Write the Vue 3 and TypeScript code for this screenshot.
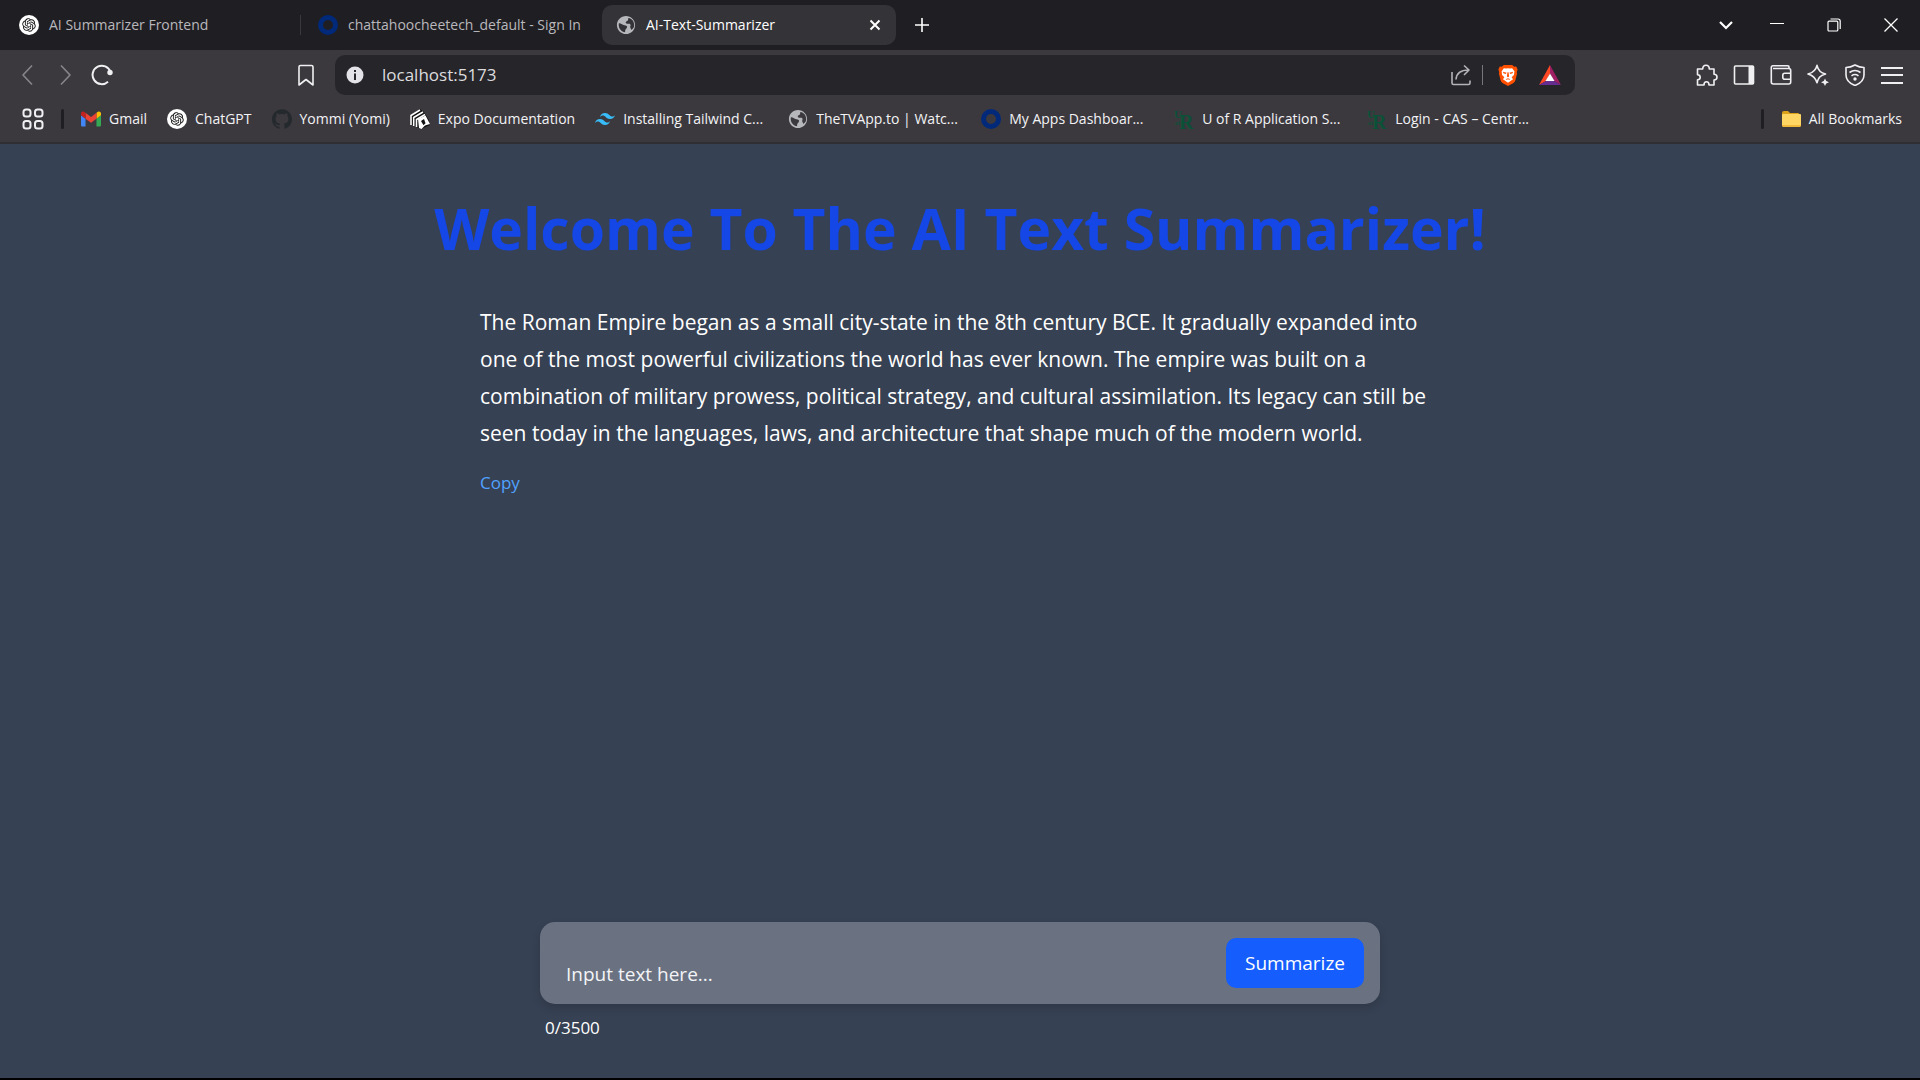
<script setup lang="ts">
import { computed, ref } from 'vue'

interface Tab {
  icon: string
  title: string
  active: boolean
}

interface Bookmark {
  icon: string
  label: string
  clipped?: boolean
}

const MAX_CHARS = 3500

const tabs: Tab[] = [
  { icon: 'openai', title: 'AI Summarizer Frontend', active: false },
  { icon: 'ring', title: 'chattahoocheetech_default - Sign In', active: false },
  { icon: 'globe', title: 'AI-Text-Summarizer', active: true },
]

const bookmarks: Bookmark[] = [
  { icon: 'gmail', label: 'Gmail' },
  { icon: 'openai', label: 'ChatGPT' },
  { icon: 'github', label: 'Yommi (Yomi)' },
  { icon: 'expo', label: 'Expo Documentation' },
  { icon: 'tailwind', label: 'Installing Tailwind C...', clipped: true },
  { icon: 'globe', label: 'TheTVApp.to | Watc...', clipped: true },
  { icon: 'ring', label: 'My Apps Dashboar...', clipped: true },
  { icon: 'regina', label: 'U of R Application S...', clipped: true },
  { icon: 'regina', label: 'Login - CAS – Centr...', clipped: true },
]

const tools = [
  { icon: 'puzzle', name: 'Extensions' },
  { icon: 'sidebar', name: 'Sidebar' },
  { icon: 'wallet', name: 'Wallet' },
  { icon: 'sparkle', name: 'Assistant' },
  { icon: 'vpn', name: 'VPN' },
  { icon: 'menu', name: 'Menu' },
]

const address = ref('localhost:5173')
const draft = ref('')
const counter = computed(() => `${draft.value.length}/${MAX_CHARS}`)

const summary = ref(
  'The Roman Empire began as a small city-state in the 8th century BCE. It gradually expanded into one of the most powerful civilizations the world has ever known. The empire was built on a combination of military prowess, political strategy, and cultural assimilation. Its legacy can still be seen today in the languages, laws, and architecture that shape much of the modern world.',
)

function copySummary(): void {
  void navigator.clipboard?.writeText(summary.value)
}
</script>

<template>
  <svg class="sprite" aria-hidden="true">
    <symbol id="openai" viewBox="0 0 40 40">
      <circle cx="20" cy="20" r="20" fill="#fff" />
      <path
        transform="translate(6.5 6.5) scale(1.125)"
        fill="#111"
        d="M22.2819 9.8211a5.9847 5.9847 0 0 0-.5157-4.9108 6.0462 6.0462 0 0 0-6.5098-2.9A6.0651 6.0651 0 0 0 4.9807 4.1818a5.9847 5.9847 0 0 0-3.9977 2.9 6.0462 6.0462 0 0 0 .7427 7.0966 5.98 5.98 0 0 0 .511 4.9107 6.051 6.051 0 0 0 6.5146 2.9001A5.9847 5.9847 0 0 0 13.2599 24a6.0557 6.0557 0 0 0 5.7718-4.2058 5.9894 5.9894 0 0 0 3.9977-2.9001 6.0557 6.0557 0 0 0-.7475-7.0729zm-9.022 12.6081a4.4755 4.4755 0 0 1-2.8764-1.0408l.1419-.0804 4.7783-2.7582a.7948.7948 0 0 0 .3927-.6813v-6.7369l2.02 1.1686a.071.071 0 0 1 .038.052v5.5826a4.504 4.504 0 0 1-4.4945 4.4944zm-9.6607-4.1254a4.4708 4.4708 0 0 1-.5346-3.0137l.142.0852 4.783 2.7582a.7712.7712 0 0 0 .7806 0l5.8428-3.3685v2.3324a.0804.0804 0 0 1-.0332.0615L9.74 19.9502a4.4992 4.4992 0 0 1-6.1408-1.6464zM2.3408 7.8956a4.485 4.485 0 0 1 2.3655-1.9728V11.6a.7664.7664 0 0 0 .3879.6765l5.8144 3.3543-2.0201 1.1685a.0757.0757 0 0 1-.071 0l-4.8303-2.7865A4.504 4.504 0 0 1 2.3408 7.872zm16.5963 3.8558L13.1038 8.364 15.1192 7.2a.0757.0757 0 0 1 .071 0l4.8303 2.7913a4.4944 4.4944 0 0 1-.6765 8.1042v-5.6772a.79.79 0 0 0-.407-.667zm2.0107-3.0231l-.142-.0852-4.7735-2.7818a.7759.7759 0 0 0-.7854 0L9.409 9.2297V6.8974a.0662.0662 0 0 1 .0284-.0615l4.8303-2.7866a4.4992 4.4992 0 0 1 6.6802 4.66zM8.3065 12.863l-2.02-1.1638a.0804.0804 0 0 1-.038-.0567V6.0742a4.4992 4.4992 0 0 1 7.3757-3.4537l-.142.0805L8.704 5.459a.7948.7948 0 0 0-.3927.6813zm1.0976-2.3654l2.602-1.4998 2.6069 1.4998v2.9994l-2.5974 1.4997-2.6067-1.4997Z"
      />
    </symbol>
    <symbol id="ring" viewBox="0 0 20 20">
      <circle cx="10" cy="10" r="7.5" fill="none" stroke="#00297a" stroke-width="5" />
    </symbol>
    <symbol id="globe" viewBox="1 1 22 22">
      <path
        fill="currentColor"
        d="M12 2C6.48 2 2 6.48 2 12s4.48 10 10 10 10-4.48 10-10S17.52 2 12 2zm-1 17.93c-3.95-.49-7-3.85-7-7.93 0-.62.08-1.21.21-1.79 1.5-.5 3.500 1.200 5 1.800 1.600.500 3 .200 3.800 1.500.700 1.300-.600 2.500-1.500 3.490-.4.9-.51 1.600-.51 2.930zm6.900-2.540c-.3-1.6-1.500-2.100-1.300-3.400.2-1.200 1.200-2.400-.600-3.300-1.500-.6-3.900.200-4.300-1.300-.3-1.700 2.300-1.500 2.600-3 .1-.7-.2-1.300.500-1.980 3.500.3 6.200 3.980 6.200 7.590 0 2.080-.8 3.970-3.100 5.390z"
      />
    </symbol>
    <symbol id="gmail" viewBox="52 42 88 66">
      <path fill="#4285f4" d="M58 108h14V74L52 59v43c0 3.320 2.690 6 6 6" />
      <path fill="#34a853" d="M120 108h14c3.320 0 6-2.690 6-6V59l-20 15" />
      <path fill="#fbbc04" d="M120 48v26l20-15v-8c0-7.420-8.470-11.650-14.400-7.200" />
      <path fill="#ea4335" d="M72 74V48l24 18 24-18v26L96 92" />
      <path fill="#c5221f" d="M52 51v8l20 15V48l-5.600-4.200c-5.940-4.450-14.400-.22-14.400 7.200" />
    </symbol>
    <symbol id="github" viewBox="0 0 24 24">
      <path
        fill="#24292e"
        d="M12 .297c-6.63 0-12 5.373-12 12 0 5.303 3.438 9.8 8.205 11.385.6.113.82-.258.82-.577 0-.285-.01-1.04-.015-2.04-3.338.724-4.042-1.61-4.042-1.61C4.422 18.070 3.633 17.700 3.633 17.700c-1.087-.744.084-.729.084-.729 1.205.084 1.838 1.236 1.838 1.236 1.070 1.835 2.809 1.305 3.495.998.108-.776.417-1.305.76-1.605-2.665-.3-5.466-1.332-5.466-5.930 0-1.310.465-2.380 1.235-3.220-.135-.303-.54-1.523.105-3.176 0 0 1.005-.322 3.300 1.230.96-.267 1.980-.399 3-.405 1.020.006 2.040.138 3 .405 2.280-1.552 3.285-1.230 3.285-1.230.645 1.653.24 2.873.12 3.176.765.840 1.230 1.910 1.230 3.220 0 4.610-2.805 5.625-5.475 5.920.42.360.81 1.096.81 2.220 0 1.606-.015 2.896-.015 3.286 0 .315.210.690.825.570C20.565 22.092 24 17.592 24 12.297c0-6.627-5.373-12-12-12"
      />
    </symbol>
    <symbol id="expo" viewBox="0 0 20 20">
      <path fill="#111" d="M0 7 10 0l4 3 5 8 1 5-9 4-11-5Z" />
      <path fill="none" stroke="#fff" stroke-width="1.600" d="M1 16V6.500L10 1M3.700 17V8.500L13 3M6.500 18v-7.500L15 5.500" />
      <path fill="#fff" d="m8 10 7.500-3.500L20 15l-5 1.500-3.500 3.500-2.500-1Z" />
      <path fill="#111" d="m11 12 3-2 1.500 4.200-2 2Z" />
    </symbol>
    <symbol id="tailwind" viewBox="0 0 24 24">
      <path
        fill="#38bdf8"
        d="M12.001,4.8c-3.2,0-5.2,1.6-6,4.8c1.2-1.6,2.6-2.2,4.2-1.8c0.913,0.228,1.565,0.89,2.288,1.624C13.666,10.618,15.027,12,18.001,12c3.2,0,5.2-1.6,6-4.8c-1.2,1.6-2.6,2.2-4.2,1.8c-0.913-0.228-1.565-0.89-2.288-1.624C16.337,6.182,14.976,4.8,12.001,4.8z M6.001,12c-3.2,0-5.2,1.6-6,4.8c1.2-1.6,2.6-2.2,4.2-1.8c0.913,0.228,1.565,0.89,2.288,1.624c1.177,1.194,2.538,2.576,5.512,2.576c3.2,0,5.2-1.6,6-4.8c-1.2,1.6-2.6,2.2-4.2,1.8c-0.913-0.228-1.565-0.89-2.288-1.624C10.337,13.382,8.976,12,6.001,12z"
      />
    </symbol>
    <symbol id="regina" viewBox="0 0 20 20">
      <g fill="#0b5138" font-family="Liberation Serif, serif" font-weight="bold">
        <text x="0" y="9" font-size="11">U</text>
        <text x="1" y="16" font-size="6">of</text>
        <text x="5" y="20" font-size="20">R</text>
      </g>
    </symbol>
    <symbol id="folder" viewBox="0 0 20 20">
      <path fill="#dca21c" d="M1 4q0-2 2-2h4l2 2h8q1 0 1 1v6H1Z" />
      <path fill="#ffd663" d="M1 6q0-1 1-1h17q1 0 1 1v10q0 2-2 2H3q-2 0-2-2Z" />
      <path fill="#f0b93a" d="M1 16h19q0 2-2 2H3q-2 0-2-2Z" />
    </symbol>
    <symbol id="back" viewBox="0 0 22 22"><path class="line" d="M15 1.500 6 11l9 9.500" /></symbol>
    <symbol id="forward" viewBox="0 0 22 22"><path class="line" d="m7 1.500 9 9.500-9 9.500" /></symbol>
    <symbol id="reload" viewBox="0 0 22 22">
      <path fill="none" stroke="currentColor" stroke-width="2" d="M19.500 8A9.200 9.200 0 1 0 17 17.700" />
      <circle cx="19" cy="8.500" r="2.700" fill="currentColor" />
    </symbol>
    <symbol id="ribbon" viewBox="0 0 22 22">
      <path class="line" d="M4 3q0-1.500 1.500-1.500h11Q18 1.500 18 3v18l-7-5.500L4 21Z" />
    </symbol>
    <symbol id="info" viewBox="0 0 18 18">
      <circle cx="9" cy="9" r="8.500" fill="#e3e3e8" />
      <path fill="#26252a" d="M8 7.500h2V14H8ZM8 4h2v2H8Z" />
    </symbol>
    <symbol id="share" viewBox="0 0 22 22">
      <path class="line" d="M2 8v11q0 1.500 1.500 1.500h15q1.500 0 1.500-1.500v-2.500M6 15.500C6.500 9 11 6 18.500 6M14 1.500 19 6l-5 5" />
    </symbol>
    <symbol id="brave" viewBox="0 0 22 24">
      <path fill="#ff5000" d="M6.500 1h9L18 3l2-.3L21.500 6l-1 3 .5 1-2 8q-.5 2-2.500 3L11 24l-5.500-3Q3.500 20 3 18l-2-8 .5-1-1-3L2 2.700 4 3Z" />
      <path
        fill="#fff"
        d="m4 8 2.500-3.500 2.500.5 2-.5 2 .5 2.500-.5L18 8l-.5 4-2.500 2.500 1.500 2L11 20.500l-5.500-4 1.500-2L4.500 12Z"
      />
      <path
        fill="#ff5000"
        d="m5.500 8.500 4 1-1 1.500-2.500-1Zm11 0-4 1 1 1.500 2.500-1ZM10.400 9h1.200l.6 4.500-1.200 1-1.200-1ZM8.500 16.500l2.500-1 2.500 1-1 .8-1.500-.8-1.500.8Z"
      />
    </symbol>
    <symbol id="bat" viewBox="0 0 22 20">
      <path fill="#ff4724" d="M11 0 0 20l7-4 4-7.500Z" />
      <path fill="#9e1f63" d="m11 0 11 20-7-4-4-7.500Z" />
      <path fill="#662d91" d="M0 20h22l-7-4H7Z" />
      <path fill="#fff" d="m11 8.500 4.500 7.500h-9Z" />
    </symbol>
    <symbol id="puzzle" viewBox="0 0 22 22">
      <path
        class="line"
        d="M1.500 5h5.200C6.700 2.800 7.800 1.200 10 1.200s3.300 1.600 3.300 3.800H18v5.200c2 0 3 1.100 3 2.800s-1 3-3 3v5h-5c0-2-.8-3.200-2.500-3.200S8 19 8 21H1.500v-5.200c1.800 0 2.700-.9 2.700-2.500s-.9-2.600-2.700-2.600Z"
      />
    </symbol>
    <symbol id="sidebar" viewBox="0 0 22 22">
      <rect class="line" x="1.500" y="2" width="19" height="18" rx="1" />
      <path fill="currentColor" d="M15.500 2h5.500v18h-5.500Z" />
    </symbol>
    <symbol id="wallet" viewBox="0 0 22 22">
      <path
        class="line"
        d="M19 4.500V3q0-1.200-1.200-1.200H3Q1.300 1.800 1.300 3.500V18q0 2 2 2h15.400q2 0 2-2V6.500q0-2-2-2H3M20.500 9.300h-5.700q-2 0-2 2v2q0 2 2 2h5.700"
      />
    </symbol>
    <symbol id="sparkle" viewBox="0 0 22 22">
      <path class="line" d="M10 1.300q1.500 7 8.500 8.700-4 1-6 3.300-1.500 2-2.500 5.400Q8 12 1 10 8.500 8 10 1.300Z" />
      <path fill="currentColor" d="m18 14.500 1.200 2.600L22 18.300l-2.800 1.200L18 22l-1.200-2.500-2.800-1.200 2.800-1.200Z" />
    </symbol>
    <symbol id="vpn" viewBox="0 0 22 22">
      <path class="line" d="M11 1q4.500 2.500 9 2.500v7.500q0 7-9 10.500-9-3.500-9-10.500V3.500Q6.500 3.500 11 1Z" />
      <path class="line" d="M5.500 8.500q5.500-4 11 0M7.500 11.800q3.500-2.500 7 0" />
      <circle cx="11" cy="15" r="1.700" fill="currentColor" />
    </symbol>
    <symbol id="menu" viewBox="0 0 22 22">
      <path fill="none" stroke="currentColor" stroke-width="2" d="M0 4h22M0 11h22M0 19h22" />
    </symbol>
    <symbol id="apps" viewBox="0 0 22 22">
      <g fill="none" stroke="currentColor" stroke-width="2">
        <rect x="1.500" y="1.500" width="7" height="7" rx="2.500" />
        <rect x="13" y="1.500" width="7.500" height="7" rx="2.500" />
        <rect x="1.500" y="13" width="7" height="7.500" rx="2.500" />
        <rect x="13" y="13" width="7.500" height="7.500" rx="2.500" />
      </g>
    </symbol>
    <symbol id="close-tab" viewBox="0 0 14 14">
      <path fill="none" stroke="currentColor" stroke-width="2" d="m2.500 2.500 9 9m0-9-9 9" />
    </symbol>
    <symbol id="plus" viewBox="0 0 14 14">
      <path fill="none" stroke="currentColor" stroke-width="1.600" d="M7 0v14M0 7h14" />
    </symbol>
    <symbol id="chevron" viewBox="0 0 14 14">
      <path fill="none" stroke="currentColor" stroke-width="2.200" d="m1 4 6 6 6-6" />
    </symbol>
    <symbol id="minimize" viewBox="0 0 14 14"><path fill="currentColor" d="M0 5h14v1H0Z" /></symbol>
    <symbol id="restore" viewBox="0 0 14 14">
      <g fill="none" stroke="currentColor" stroke-width="1.200">
        <rect x="1" y="3.200" width="9.800" height="9.800" rx="1" />
        <path d="M3.500 1h7.500q2.200 0 2.200 2.200V11" />
      </g>
    </symbol>
    <symbol id="close" viewBox="0 0 14 14">
      <path fill="none" stroke="currentColor" stroke-width="1.300" d="m.5.5 13 13m0-13-13 13" />
    </symbol>
  </svg>

  <div class="window">
    <header class="chrome">
      <div class="tab-strip">
        <nav class="tabs" aria-label="Tabs">
          <div v-for="tab in tabs" :key="tab.title" class="tab" :class="{ active: tab.active }">
            <button class="tab-title" type="button">
              <svg class="favicon"><use :href="`#${tab.icon}`" /></svg>
              <span>{{ tab.title }}</span>
            </button>
            <button v-if="tab.active" class="small-button" type="button" aria-label="Close tab">
              <svg><use href="#close-tab" /></svg>
            </button>
          </div>
          <button class="small-button new-tab" type="button" aria-label="New tab">
            <svg><use href="#plus" /></svg>
          </button>
        </nav>
        <div class="window-controls">
          <button class="small-button" type="button" aria-label="Search tabs"><svg><use href="#chevron" /></svg></button>
          <div class="frame-buttons">
            <button class="small-button" type="button" aria-label="Minimize"><svg><use href="#minimize" /></svg></button>
            <button class="small-button" type="button" aria-label="Restore"><svg><use href="#restore" /></svg></button>
            <button class="small-button" type="button" aria-label="Close"><svg><use href="#close" /></svg></button>
          </div>
        </div>
      </div>

      <div class="toolbar">
        <div class="nav-buttons">
          <button class="tool dim" type="button" aria-label="Back"><svg><use href="#back" /></svg></button>
          <button class="tool dim" type="button" aria-label="Forward"><svg><use href="#forward" /></svg></button>
          <button class="tool" type="button" aria-label="Reload"><svg><use href="#reload" /></svg></button>
        </div>
        <button class="tool" type="button" aria-label="Bookmark this page"><svg><use href="#ribbon" /></svg></button>
        <div class="address-bar">
          <svg class="site-info"><use href="#info" /></svg>
          <input v-model="address" class="address" type="text" aria-label="Address" spellcheck="false" />
          <button class="tool share" type="button" aria-label="Share"><svg><use href="#share" /></svg></button>
          <span class="rule"></span>
          <button class="tool" type="button" aria-label="Shields"><svg><use href="#brave" /></svg></button>
          <button class="tool" type="button" aria-label="Rewards"><svg><use href="#bat" /></svg></button>
        </div>
        <div class="tools">
          <button v-for="tool in tools" :key="tool.icon" class="tool" type="button" :aria-label="tool.name">
            <svg><use :href="`#${tool.icon}`" /></svg>
          </button>
        </div>
      </div>

      <nav class="bookmarks" aria-label="Bookmarks">
        <button class="tool" type="button" aria-label="Tab groups"><svg><use href="#apps" /></svg></button>
        <span class="divider"></span>
        <a
          v-for="bookmark in bookmarks"
          :key="bookmark.label"
          class="bookmark"
          :class="{ clipped: bookmark.clipped }"
          href="#"
        >
          <svg class="favicon"><use :href="`#${bookmark.icon}`" /></svg>
          <span>{{ bookmark.label }}</span>
        </a>
        <span class="divider last"></span>
        <a class="bookmark" href="#">
          <svg class="favicon"><use href="#folder" /></svg>
          <span>All Bookmarks</span>
        </a>
      </nav>
    </header>

    <main class="page">
      <h1>Welcome To The AI Text Summarizer!</h1>
      <section class="result">
        <p>{{ summary }}</p>
        <button class="copy" type="button" @click="copySummary">Copy</button>
      </section>
      <form class="composer" @submit.prevent>
        <div class="field">
          <textarea
            v-model="draft"
            rows="1"
            :maxlength="MAX_CHARS"
            placeholder="Input text here..."
            aria-label="Input text"
          ></textarea>
          <button class="submit" type="submit">Summarize</button>
        </div>
        <output class="counter">{{ counter }}</output>
      </form>
    </main>
  </div>
</template>

<style>
body {
  margin: 0;
  background: #000;
}
</style>

<style scoped>
* {
  box-sizing: border-box;
}

.sprite {
  display: none;
}

.line {
  fill: none;
  stroke: currentColor;
  stroke-width: 1.6;
  stroke-linejoin: round;
}

.window {
  display: flex;
  flex-direction: column;
  min-height: 100vh;
  border-bottom: 2px solid #000;
  font-family: 'Open Sans', 'Noto Sans', sans-serif;
  color: #fff;
}

button,
input,
textarea {
  margin: 0;
  padding: 0;
  border: 0;
  outline: 0;
  background: none;
  color: inherit;
  font: inherit;
}

svg {
  display: block;
  flex: none;
}

/* Browser chrome */
.chrome {
  background: #3b393e;
  border-bottom: 2px solid #2f2e33;
  font-size: 14px;
  line-height: 20px;
}

.tab-strip {
  display: flex;
  justify-content: space-between;
  align-items: center;
  height: 50px;
  padding-left: 7px;
  background: #1f1e23;
}

.tabs {
  display: flex;
  align-items: center;
}

.tab {
  display: flex;
  align-items: center;
  width: 294px;
  height: 40px;
  padding: 0 14px 0 12px;
  border-radius: 10px;
  color: #b9b8bc;
}

.tab + .tab {
  margin-left: 5px;
}

.tab:first-child {
  background: linear-gradient(#3b393e, #3b393e) right center / 1px 20px no-repeat;
  border-radius: 0;
}

.tab.active {
  margin-left: 2px;
  padding-left: 14px;
  background: #343338;
  color: #fff;
}

.tab-title {
  display: flex;
  flex: 1;
  align-items: center;
  gap: 10px;
  min-width: 0;
  white-space: nowrap;
}

.favicon {
  width: 20px;
  height: 20px;
  color: #b5b7bb;
}

.small-button svg {
  width: 14px;
  height: 14px;
}

.new-tab {
  margin-left: 19px;
}

.window-controls,
.frame-buttons {
  display: flex;
}

.window-controls {
  gap: 37px;
  padding-right: 22px;
}

.frame-buttons {
  gap: 43px;
}

.toolbar {
  display: flex;
  align-items: center;
  height: 50px;
  padding: 0 17px;
}

.nav-buttons {
  display: flex;
  flex: 0 1 278px;
  gap: 15px;
}

.tool {
  color: #f0f0f2;
}

.tool svg {
  width: 22px;
  height: 22px;
}

.dim {
  color: #87868b;
}

.address-bar {
  display: flex;
  flex: 1;
  align-items: center;
  min-width: 0;
  height: 40px;
  margin-left: 18px;
  padding: 0 14px 0 11px;
  border-radius: 10px;
  background: #26252a;
}

.site-info {
  width: 18px;
  height: 18px;
}

.address {
  flex: 1;
  min-width: 0;
  margin-left: 18px;
  font-size: 17px;
  line-height: 24px;
  color: #dcdcdf;
}

.share {
  color: #b4b3b8;
}

.rule {
  width: 1px;
  height: 20px;
  margin: 0 14px 0 10px;
  background: #77767b;
}

.rule ~ .tool + .tool {
  margin-left: 20px;
}

.tools {
  display: flex;
  justify-content: flex-end;
  flex: 0 1 328px;
  gap: 15px;
}

.bookmarks {
  display: flex;
  align-items: center;
  gap: 20px;
  height: 42px;
  padding: 0 18px 4px 22px;
}

.divider {
  flex: none;
  width: 3px;
  height: 20px;
  margin: 0 -3px;
  border-radius: 2px;
  background: #1f1e23;
}

.last {
  margin-left: auto;
}

.bookmark {
  display: flex;
  align-items: center;
  gap: 8px;
  color: #f3f3f5;
  text-decoration: none;
  white-space: nowrap;
}

.clipped {
  width: 173px;
}

/* Summarizer page */
.page {
  display: flex;
  flex: 1;
  flex-direction: column;
  align-items: center;
  padding: 49px 40px 38px;
  background: #364153;
}

h1 {
  margin: 0;
  color: #1447e6;
  font-size: 57px;
  font-weight: 700;
  line-height: 70px;
  text-align: center;
}

.result {
  width: 100%;
  max-width: 960px;
  margin-top: 41px;
}

.result p {
  margin: 0;
  font-size: 21px;
  line-height: 37px;
}

.copy {
  display: block;
  margin-top: 18px;
  color: #51a2ff;
  font-size: 17px;
  line-height: 25px;
}

.composer {
  width: 100%;
  max-width: 840px;
  margin-top: auto;
}

.field {
  display: flex;
  align-items: flex-start;
  gap: 16px;
  padding: 16px;
  border-radius: 15px;
  background: #6a7282;
  box-shadow: 0 4px 8px rgb(0 0 0 / 15%);
}

textarea {
  flex: 1;
  min-width: 0;
  height: 50px;
  padding: 23px 10px 0;
  font-size: 19px;
  line-height: 26px;
  resize: none;
  overflow: hidden;
}

textarea::placeholder {
  color: #f3f4f6;
}

.submit {
  width: 138px;
  height: 50px;
  border-radius: 10px;
  background: #155dfc;
  font-size: 19px;
  line-height: 26px;
}

.counter {
  display: block;
  margin: 11px 5px 0;
  font-size: 17px;
  line-height: 25px;
}
</style>
